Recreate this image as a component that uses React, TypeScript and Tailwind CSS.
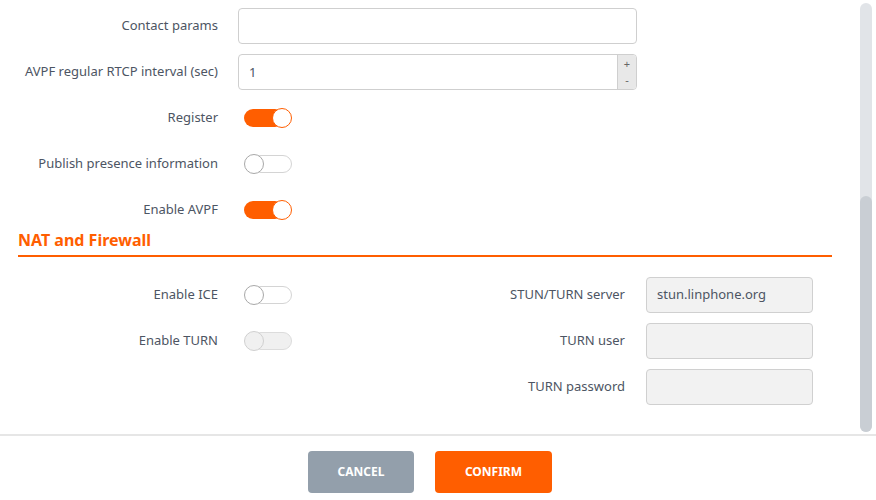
import React from 'react'

// ── Toggle ────────────────────────────────────────────────────

type ToggleState = 'on' | 'off' | 'disabled'

function Toggle({ state }: { state: ToggleState }) {
  if (state === 'on') {
    return (
      <div className="relative ml-[6px] h-[20px] w-[48px]">
        <div className="absolute left-0 top-[1px] h-[18px] w-[40px] rounded-full bg-[#ff5e00]" />
        <div className="absolute right-0 top-0 h-[20px] w-[20px] rounded-full border-[1.5px] border-[#ff5e00] bg-white" />
      </div>
    )
  }
  const disabled = state === 'disabled'
  return (
    <div className="relative ml-[6px] h-[20px] w-[48px]">
      <div
        className={`absolute right-0 top-[1px] h-[18px] w-[40px] rounded-full border ${
          disabled ? 'border-[#dcdcdc] bg-[#f0f0f0]' : 'border-[#d4d4d4] bg-white'
        }`}
      />
      <div
        className={`absolute left-0 top-0 h-[20px] w-[20px] rounded-full border-[1.5px] ${
          disabled ? 'border-[#d0d0d0] bg-[#f0f0f0]' : 'border-[#a8a8a8] bg-white'
        }`}
      />
    </div>
  )
}

// ── Rows ──────────────────────────────────────────────────────

function Label({ children }: { children: React.ReactNode }) {
  return <div className="w-[200px] shrink-0 text-right text-[13px] text-[#4d5563]">{children}</div>
}

function Row({ label, children }: { label: string; children: React.ReactNode }) {
  return (
    <div className="flex h-[46px] items-center gap-[20px]">
      <Label>{label}</Label>
      {children}
    </div>
  )
}

function GrayInput({ value }: { value?: string }) {
  return (
    <div className="flex h-[36px] w-[167px] items-center rounded-[4px] border border-[#d0d0d0] bg-[#f2f2f2] px-[10px] text-[13px] text-[#4d5563]">
      {value}
    </div>
  )
}

// ── App ───────────────────────────────────────────────────────

export default function App() {
  return (
    <div
      className="flex h-[500px] w-[876px] flex-col bg-white"
      style={{ fontFamily: '"Noto Sans", "Open Sans", sans-serif' }}
    >
      <div className="flex h-[434px] shrink-0">
        <div className="flex-1 pl-[18px] pt-[3px]">
          <Row label="Contact params">
            <div className="h-[36px] w-[399px] rounded-[4px] border border-[#cfcfcf] bg-white" />
          </Row>
          <Row label="AVPF regular RTCP interval (sec)">
            <div className="flex h-[36px] w-[399px] overflow-hidden rounded-[4px] border border-[#cfcfcf] bg-white">
              <div className="flex flex-1 items-center px-[10px] pt-[2px] text-[13px] text-[#4d5563]">1</div>
              <div className="flex w-[19px] flex-col items-center justify-between border-l border-[#cfcfcf] bg-[#e8e8e8] py-[1px] text-[11px] leading-[16px] text-[#666]">
                <span>+</span>
                <span>-</span>
              </div>
            </div>
          </Row>
          <Row label="Register">
            <Toggle state="on" />
          </Row>
          <Row label="Publish presence information">
            <Toggle state="off" />
          </Row>
          <Row label="Enable AVPF">
            <Toggle state="on" />
          </Row>

          <div className="mr-[28px] -mt-[1px] border-b-2 border-[#ff5e00] pb-[7px]">
            <h2 className="text-[16px] font-bold leading-[16px] text-[#ff5e00]">NAT and Firewall</h2>
          </div>

          <div className="mt-[15px] flex">
            <div className="w-[407px]">
              <Row label="Enable ICE">
                <Toggle state="off" />
              </Row>
              <Row label="Enable TURN">
                <Toggle state="disabled" />
              </Row>
            </div>
            <div className="w-[407px]">
              <div className="flex h-[46px] items-center gap-[21px]">
                <Label>STUN/TURN server</Label>
                <GrayInput value="stun.linphone.org" />
              </div>
              <div className="flex h-[46px] items-center gap-[21px]">
                <Label>TURN user</Label>
                <GrayInput />
              </div>
              <div className="flex h-[46px] items-center gap-[21px]">
                <Label>TURN password</Label>
                <GrayInput />
              </div>
            </div>
          </div>
        </div>

        {/* scrollbar */}
        <div className="mr-[4px] mt-[3px] flex h-[429px] w-[12px] flex-col justify-end rounded-full bg-[#e1e4e8]">
          <div className="h-[236px] w-full rounded-full bg-[#c9ced4]" />
        </div>
      </div>

      <div className="flex flex-1 items-center justify-center gap-[21px] border-t-2 border-[#e6e6e6] pr-[16px] pt-[7px]">
        <button className="h-[42px] w-[106px] rounded-[4px] bg-[#939fab] text-[12px] font-bold text-white">
          CANCEL
        </button>
        <button className="h-[42px] w-[117px] rounded-[4px] bg-[#ff5e00] text-[12px] font-bold text-white">
          CONFIRM
        </button>
      </div>
    </div>
  )
}
